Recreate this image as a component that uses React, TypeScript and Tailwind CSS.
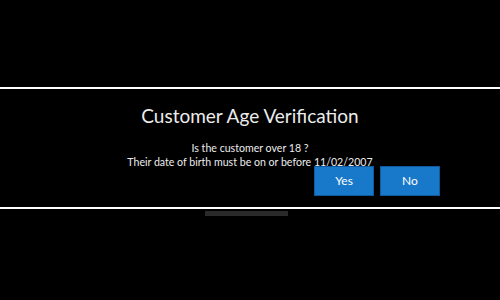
export default function App() {
  return (
    <div className="w-[500px] h-[300px] bg-black flex flex-col" style={{ fontFamily: 'Lato, "Open Sans", sans-serif' }}>
      <div className="h-[87px] shrink-0" />
      <div className="h-[2px] bg-white shrink-0" />
      <div className="h-[118px] shrink-0 flex flex-col items-center text-[#ececec]">
        <div className="mt-[14px] text-[19px] leading-[26px]">Customer Age Verification</div>
        <div className="mt-[12px] text-[10.6px] leading-[14px] text-center">
          <div>Is the customer over 18 ?</div>
          <div>Their date of birth must be on or before 11/02/2007</div>
        </div>
        <div className="self-end mr-[60px] mt-[-3px] flex gap-[6px]">
          <button className="w-[60px] h-[30px] bg-[#1878c9] border border-[#0f5a9e] text-white text-[12px]">Yes</button>
          <button className="w-[60px] h-[30px] bg-[#1878c9] border border-[#0f5a9e] text-white text-[12px]">No</button>
        </div>
      </div>
      <div className="h-[2px] bg-white shrink-0" />
      <div className="mt-[2px] ml-[205px] w-[83px] h-[5px] bg-[#2a2a2a]" />
    </div>
  );
}
